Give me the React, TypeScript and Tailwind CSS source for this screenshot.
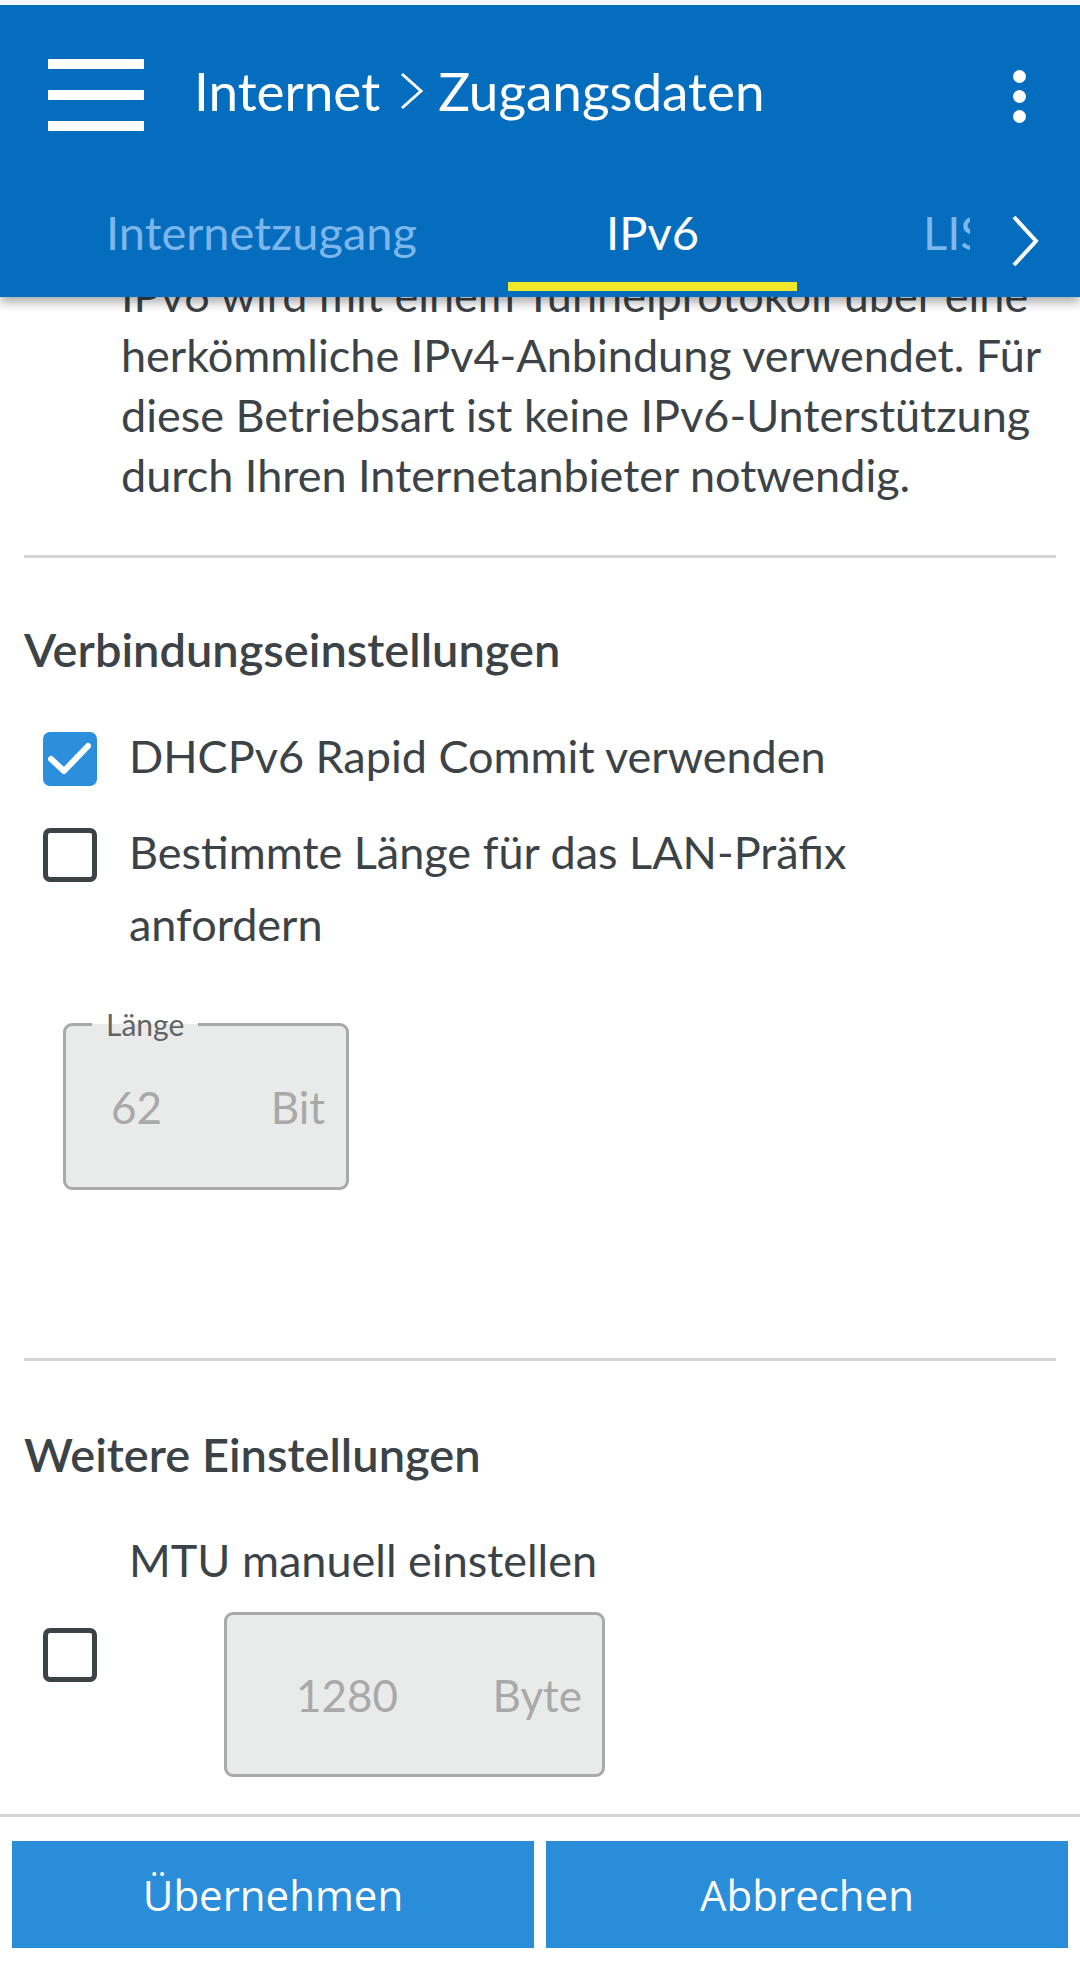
import type { ReactNode } from 'react'

const TEXT = 'text-[#3c4347]'

function Checkbox({ checked = false }: { checked?: boolean }) {
  if (checked) {
    return (
      <div className="w-[54px] h-[54px] shrink-0 rounded-[7px] bg-[#2b8fde] flex items-center justify-center">
        <svg width="54" height="54" viewBox="0 0 54 54" fill="none">
          <polyline
            points="8,27 21,39 45,14"
            stroke="white"
            strokeWidth="6"
            strokeLinecap="round"
            strokeLinejoin="round"
          />
        </svg>
      </div>
    )
  }
  return <div className="w-[54px] h-[54px] shrink-0 rounded-[7px] border-[5px] border-[#3c4347]" />
}

function ValueField({
  value,
  unit,
  label,
  className = '',
}: {
  value: string
  unit: string
  label?: string
  className?: string
}) {
  return (
    <div
      className={`relative flex items-center justify-between border-[3px] border-[#a9a9a9] rounded-[9px] bg-[#e9ebea] text-[44px] leading-[52px] text-[#a9a9a9] ${className}`}
    >
      {label && (
        <span className="absolute left-[26px] -top-[20px] px-[14px] text-[30px] leading-[36px] text-[#5f6467] bg-[linear-gradient(to_bottom,#ffffff_50%,#e9ebea_50%)]">
          {label}
        </span>
      )}
      <span>{value}</span>
      <span>{unit}</span>
    </div>
  )
}

function Divider({ className = '' }: { className?: string }) {
  return <div className={`h-[3px] bg-[#d5d5d5] ${className}`} />
}

function CheckRow({ checked, children, className = '' }: { checked?: boolean; children: ReactNode; className?: string }) {
  return (
    <div className={`flex items-start ${className}`}>
      <div className="ml-[19px] mt-[12px]">
        <Checkbox checked={checked} />
      </div>
      <div className={`ml-[32px] text-[45px] leading-[72px] ${TEXT}`}>{children}</div>
    </div>
  )
}

function Tab({ label, active, className = '' }: { label: string; active?: boolean; className?: string }) {
  return (
    <div className={`shrink-0 flex flex-col items-center ${className}`}>
      <span
        className={`h-[60px] text-[47px] leading-[60px] whitespace-nowrap ${
          active ? 'text-white' : 'text-[#7db6ea]'
        }`}
      >
        {label}
      </span>
      <div className={`mt-[20px] h-[9px] w-full ${active ? 'bg-[#f1e82c]' : ''}`} />
    </div>
  )
}

function Header() {
  return (
    <header className="relative z-10 shrink-0 bg-[#056dbe] shadow-[0_5px_10px_rgba(0,0,0,0.35)]">
      <div className="h-[5px] bg-[#f4f6f8]" />

      {/* Title row */}
      <div className="h-[197px] flex items-start pt-[54px] pl-[48px] pr-[54px]">
        <div className="flex flex-col gap-[21px]">
          <div className="w-[96px] h-[10px] bg-white" />
          <div className="w-[96px] h-[10px] bg-white" />
          <div className="w-[96px] h-[10px] bg-white" />
        </div>
        <div className="ml-[50px] flex items-center h-[64px] text-[53px] leading-[64px] text-white whitespace-nowrap">
          <span>Internet</span>
          <svg className="ml-[20px] mr-[14px]" width="24" height="38" viewBox="0 0 24 38" fill="none">
            <polyline points="2,2 21,19 2,36" stroke="white" strokeWidth="3" />
          </svg>
          <span>Zugangsdaten</span>
        </div>
        <div className="ml-auto mt-[11px] flex flex-col gap-[7px]">
          <div className="w-[13px] h-[13px] rounded-full bg-white" />
          <div className="w-[13px] h-[13px] rounded-full bg-white" />
          <div className="w-[13px] h-[13px] rounded-full bg-white" />
        </div>
      </div>

      {/* Tabs */}
      <div className="h-[95px] flex">
        <div className="flex-1 flex overflow-hidden">
          <Tab label="Internetzugang" className="w-[508px] pl-[15px]" />
          <Tab label="IPv6" active className="w-[289px]" />
          <Tab label="LISP" className="pl-[126px]" />
        </div>
        <div className="w-[110px] flex justify-center pt-[13px]">
          <svg width="28" height="52" viewBox="0 0 28 52" fill="none">
            <polyline points="3,2 25,26 3,50" stroke="white" strokeWidth="4" />
          </svg>
        </div>
      </div>
    </header>
  )
}

export default function App() {
  return (
    <div className="w-[1080px] h-[1963px] flex flex-col bg-white overflow-hidden font-['Lato','Noto_Sans',sans-serif]">
      <Header />

      <main className="flex-1 overflow-hidden">
        <div className="px-[24px]">
          <p className={`-mt-[32px] pl-[97px] text-[45px] leading-[60px] whitespace-nowrap ${TEXT}`}>
            IPv6 wird mit einem Tunnelprotokoll über eine
            <br />
            herkömmliche IPv4-Anbindung verwendet. Für
            <br />
            diese Betriebsart ist keine IPv6-Unterstützung
            <br />
            durch Ihren Internetanbieter notwendig.
          </p>

          <Divider className="mt-[50px]" />

          <h2 className={`mt-[61px] text-[47px] leading-[60px] font-semibold ${TEXT}`}>Verbindungseinstellungen</h2>

          <CheckRow checked className="mt-[41px]">
            DHCPv6 Rapid Commit verwenden
          </CheckRow>
          <CheckRow className="mt-[24px]">
            Bestimmte Länge für das LAN-Präfix
            <br />
            anfordern
          </CheckRow>

          <ValueField
            label="Länge"
            value="62"
            unit="Bit"
            className="mt-[63px] ml-[39px] w-[286px] h-[167px] pl-[45px] pr-[21px]"
          />

          <Divider className="mt-[168px]" />

          <h2 className={`mt-[63px] text-[47px] leading-[60px] font-semibold ${TEXT}`}>Weitere Einstellungen</h2>

          <div className="mt-[40px] flex items-center">
            <div className="ml-[19px] mt-[9px]">
              <Checkbox />
            </div>
            <div className="ml-[32px] flex flex-col">
              <span className={`text-[45px] leading-[72px] ${TEXT}`}>MTU manuell einstellen</span>
              <ValueField
                value="1280"
                unit="Byte"
                className="mt-[16px] ml-[95px] w-[381px] h-[165px] pl-[69px] pr-[20px]"
              />
            </div>
          </div>
        </div>
      </main>

      <footer className="shrink-0">
        <Divider />
        <div className="flex gap-[12px] px-[12px] pt-[24px] pb-[15px]">
          <button className="flex-1 h-[107px] bg-[#2a8dd9] text-white text-[42px] font-['Open_Sans',sans-serif]">
            Übernehmen
          </button>
          <button className="flex-1 h-[107px] bg-[#2a8dd9] text-white text-[42px] font-['Open_Sans',sans-serif]">
            Abbrechen
          </button>
        </div>
      </footer>
    </div>
  )
}
